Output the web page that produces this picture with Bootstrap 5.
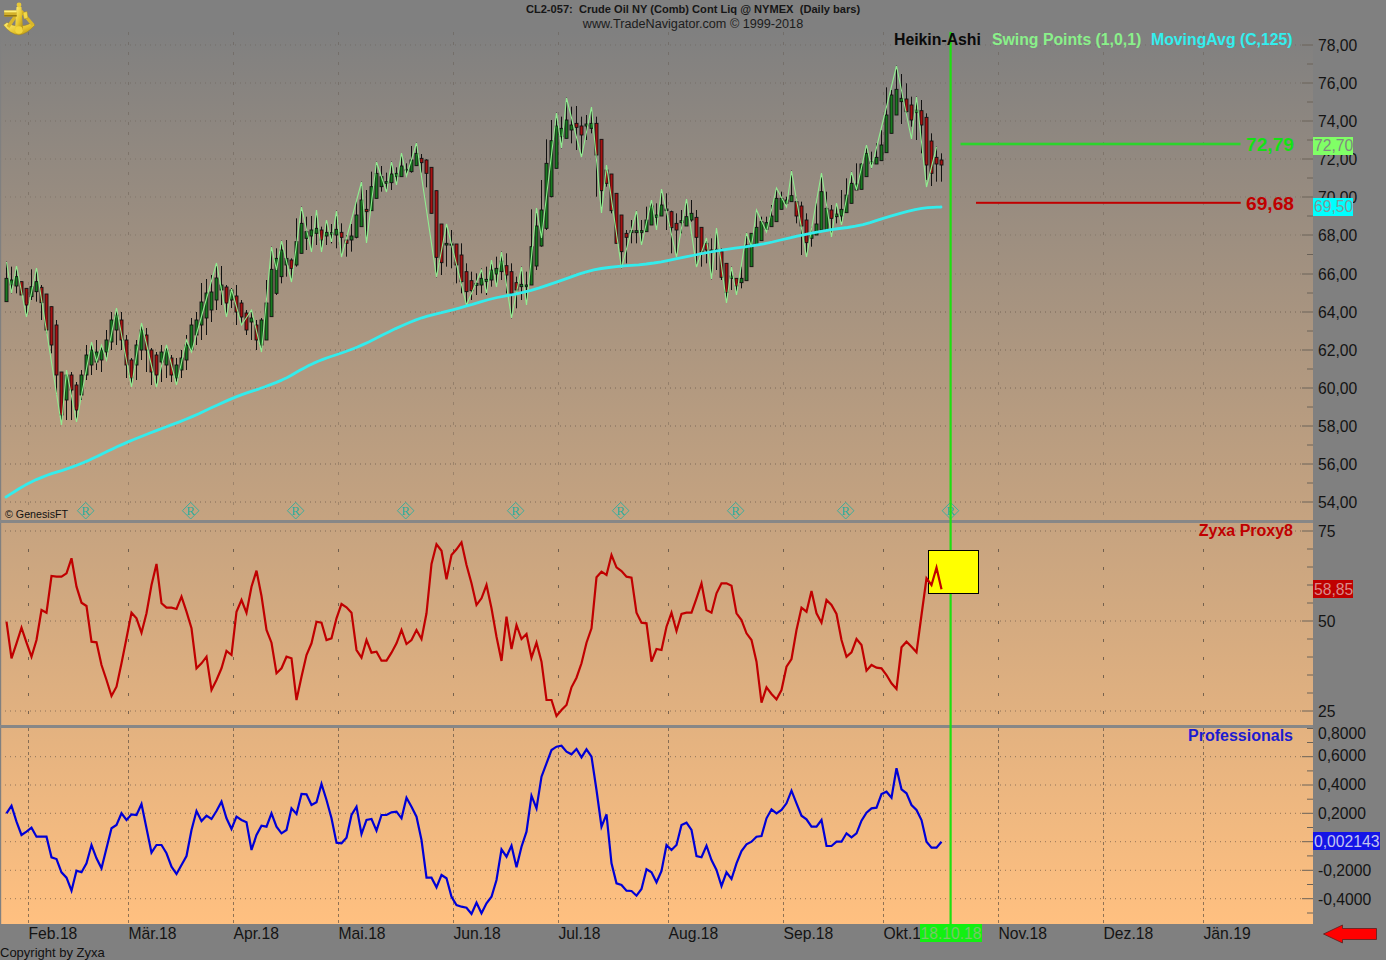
<!DOCTYPE html>
<html lang="de">
<head>
<meta charset="utf-8">
<title>CL2-057 Crude Oil NY</title>
<link href="https://cdn.jsdelivr.net/npm/bootstrap@5.3.0/dist/css/bootstrap.min.css" rel="stylesheet">
<style>
html,body{background:#808080;overflow:hidden}
.tn-app{width:1386px;height:960px;font-family:"Liberation Sans",Arial,sans-serif;background:#808080;color:#111}
.tn-head{height:32px;flex:none;color:#161616}
.tn-logo{left:0;top:0;width:36px;height:36px;z-index:3}
.tn-title{font-size:11.1px;line-height:13px;padding-top:3px;white-space:pre;font-weight:700}
.tn-sub{font-size:12.65px;line-height:16px;white-space:pre;color:#1c1c1c}
.tn-body{height:892px;flex:none}
.tn-plot{width:1313px;height:892px;flex:none;display:block;background:linear-gradient(180deg,#808080 0%,#ffc080 100%)}
.tn-axis{width:73px;height:892px;flex:none;display:block;overflow:visible}
.tn-foot{width:1386px;height:36px;flex:none;display:block}
svg text{font-family:"Liberation Sans",Arial,sans-serif}
.lab{font-size:15.7px;fill:#141414}
.leg{font-size:15.8px;font-weight:700}
.pane{font-size:16px;font-weight:700}
.big{font-size:19.2px;font-weight:700}
.tag{font-size:15.7px}
.mk{font-family:"Liberation Serif",serif !important;font-size:13px;fill:#2fae9e;text-anchor:middle}
</style>
</head>
<body>
<div class="tn-app d-flex flex-column">
  <header class="tn-head position-relative text-center">
    <svg class="tn-logo position-absolute" viewBox="0 0 36 36" aria-label="Sextant">
      <defs><linearGradient id="gold" x1="0" y1="0" x2="1" y2="1"><stop offset="0" stop-color="#fff07a"/><stop offset=".55" stop-color="#e6c52e"/><stop offset="1" stop-color="#a8850f"/></linearGradient></defs>
      <path d="M3.5 25L7 22.5Q19 30 32 22.5L35 25Q27 34 19 35Q10 34 3.5 25Z" fill="url(#gold)" stroke="#9c7c10" stroke-width=".4"/>
      <path d="M17 14L8 27M21 11L33 25" stroke="#d9b62a" stroke-width="3.4" fill="none"/>
      <path d="M16.500 7H21.500L23 30H15Z" fill="url(#gold)"/>
      <circle cx="19" cy="5" r="2.4" fill="#e8c838"/>
      <rect x="4.200" y="10.500" width="12.500" height="6" fill="#d3b02a"/>
      <rect x="4.200" y="10.500" width="12.500" height="1.800" fill="#fff07a"/>
      <rect x="4.200" y="15" width="12.500" height="1.500" fill="#94760f"/>
      <path d="M23 12.500L27 11.500L28 18L24 19Z" fill="#f2d84a" stroke="#a8850f" stroke-width=".4"/>
      <circle cx="19" cy="30" r="3.800" fill="#f3d63c"/>
    </svg>
    <div class="tn-title">CL2-057:  Crude Oil NY (Comb) Cont Liq @ NYMEX  (Daily bars)</div>
    <div class="tn-sub">www.TradeNavigator.com © 1999-2018</div>
  </header>
  <div class="tn-body d-flex">
    <svg class="tn-plot" id="plot" viewBox="0 32 1313 892" xmlns="http://www.w3.org/2000/svg">
      <g id="grid"></g>
      <g id="marks"></g>
      <g id="bars"></g>
      <polyline id="swing" fill="none" stroke="#90ee90" stroke-width="1.1" stroke-linejoin="miter"/>
      <polyline id="ma" fill="none" stroke="#33ecec" stroke-width="2.8" stroke-linejoin="round" stroke-linecap="round"/>
      <rect x="0" y="32" width="1.2" height="892" fill="#808080"/>
      <rect x="0" y="520" width="1313" height="3" fill="#878787"/>
      <rect x="0" y="725" width="1313" height="3" fill="#878787"/>
      <rect x="949.5" y="32" width="2.2" height="892" fill="#1ee010"/>
      <rect x="928.5" y="550.5" width="50" height="43" fill="#ffff00" stroke="#000" stroke-width="1"/>
      <polyline id="proxy" fill="none" stroke="#c00000" stroke-width="2.2" stroke-linejoin="miter"/>
      <polyline id="prof" fill="none" stroke="#0000d6" stroke-width="2.2" stroke-linejoin="miter"/>
      <rect x="960.5" y="142.700" width="280" height="2.600" fill="#2cd42c"/>
      <rect x="976" y="201.800" width="264.700" height="2" fill="#c00000"/>
      <text class="big" x="1246" y="150.700" fill="#14e014">72,79</text>
      <text class="big" x="1246" y="209.500" fill="#c00000">69,68</text>
      <text class="leg" x="894" y="44.700" fill="#0a0a0a">Heikin-Ashi</text>
      <text class="leg" x="992" y="44.700" fill="#8af08a">Swing Points (1,0,1)</text>
      <text class="leg" x="1151" y="44.700" fill="#33eeee">MovingAvg (C,125)</text>
      <text class="pane" x="1293" y="535.700" fill="#c00000" text-anchor="end">Zyxa Proxy8</text>
      <text class="pane" x="1293" y="740.700" fill="#1c1cd0" text-anchor="end">Professionals</text>
      <text x="5" y="518" font-size="10.7" fill="#111">© GenesisFT</text>
    </svg>
    <svg class="tn-axis" viewBox="1313 32 73 892" xmlns="http://www.w3.org/2000/svg">
      <g id="axis"></g>
      <rect x="1313" y="137" width="40" height="18" fill="#80ff66"/>
      <text class="tag" x="1314" y="151" fill="#808880">72,70</text>
      <rect x="1313" y="198" width="40" height="18" fill="#00ffff"/>
      <text class="tag" x="1314" y="212.300" fill="#7f9a9a">69,50</text>
      <rect x="1313" y="580" width="40" height="18" fill="#c00000"/>
      <text class="tag" x="1314" y="594.500" fill="#d98c8c">58,85</text>
      <rect x="1313" y="832" width="67" height="18" fill="#1414e6"/>
      <text class="tag" x="1314" y="846.500" fill="#c4c4f0">0,002143</text>
    </svg>
  </div>
  <svg class="tn-foot" viewBox="0 924 1386 36" xmlns="http://www.w3.org/2000/svg">
    <g id="dates"></g>
    <rect x="920" y="924" width="62" height="18" fill="#12f012"/>
    <text class="lab" x="920.500" y="939" style="fill:#78c868">18.10.18</text>
    <path d="M1323.5 934L1342.5 925V928.5H1376.5V939.5H1342.5V943Z" fill="#ff0000" stroke="#5a2020" stroke-width=".8"/>
    <text x="0" y="956.700" font-size="13" fill="#111">Copyright by Zyxa</text>
  </svg>
</div>
<script src="https://cdn.jsdelivr.net/npm/bootstrap@5.3.0/dist/js/bootstrap.bundle.min.js"></script>
<script>
const X=k=>6.5+5*k;
const Z=s=>s.trim().split(/\s+/).map(r=>{const a=r.split(',').map(Number);return [a[0]/3,a[1]/3,a[2]/3,a[3]/3,a[4]];});
const P=s=>s.trim().split(/\s+/).map(r=>r.split(',').map(Number));
const bars=[].concat(
Z(`785,905,835,905,1 800,880,840,855,1 798,880,830,858,1 845,885,845,885,0 865,945,865,915,0 808,900,860,890,1 805,905,845,875,1 855,960,862,908,0 882,1000,882,990,0 920,1060,920,1035,0`),
P(`320,395,325,375,0 372,425,372,415,0 370,420,375,400,1 372,420,375,390,0 382,422,385,410,0 370,400,375,395,1 345,380,355,375,1 342,375,350,365,1 340,370,352,362,1 345,372,350,360,1 330,360,340,352,1 312,350,320,342,1 308,345,315,330,1 312,350,320,340,0 335,378,340,365,0 358,387,360,378,0 340,380,345,365,1 323,360,330,350,1 328,372,335,350,0 348,385,350,372,0 352,385,355,375,0 345,382,352,362,1 345,378,350,365,1 355,382,358,375,0 358,385,365,378,1 350,378,358,370,1 335,370,345,360,1 318,352,325,350,1 312,345,320,335,1 283,340,302,325,1 279,335,293,318,1 275,322,292,310,1 263,310,278,300,1 266,305,285,290,1 285,317,287,303,0 288,308,290,300,1 285,325,296,312,0 300,325,303,317,0 310,335,313,330,0 310,340,318,322,1 320,350,325,340,0 318,352,320,345,1 280,340,303,340,1`),
Z(`740,950,808,950,1 745,885,775,880,1 722,850,750,830,1 720,830,775,795,1 775,845,780,805,0 655,800,725,795,1 620,760,670,760,1 650,750,695,715,1 648,755,690,708,1 630,735,685,700,1 680,755,690,720,0 660,735,697,708,1 672,730,698,704,1 632,745,688,705,1 670,770,697,712,0 705,770,720,730,0 672,755,708,720,1 600,715,645,712,1 545,680,600,680,1 570,728,628,635,0 515,632,560,632,1 485,595,520,595,1 498,575,530,560,1 518,575,545,550,1 485,570,522,548,1 502,555,520,530,1 460,530,498,530,1 490,528,508,512,1 438,518,480,515,1 428,497,460,497,1 462,518,475,488,0 478,562,480,520,0 502,640,502,640,0 572,832,572,772,0 672,825,672,788,0 672,800,730,735,1 690,805,732,735,1 732,850,732,795,0
730,880,765,845,0 790,920,815,875,0 815,900,842,872,0 820,885,850,856,1 805,880,835,855,1 800,885,838,845,1 780,860,810,840,1 770,860,805,822,1 755,840,783,815,1 760,880,797,825,0 790,955,815,880,0 830,925,848,870,0 800,900,853,860,1 815,915,855,860,1 628,855,740,855,1 625,810,678,798,1 540,740,630,738,1 418,690,490,685,1 360,592,422,590,1 338,505,378,505,1 350,445,385,410,1 293,415,360,415,1 320,430,375,390,1 318,450,370,382,0 350,470,378,405,0 345,420,372,378,1 322,400,370,385,1 350,590,370,465,0 418,638,418,572,0 495,560,510,550,0 522,640,522,632,0 580,730,580,730,0 645,805,645,755,0 690,790,700,712,0 660,730,692,698,1 632,730,692,698,1 660,735,692,698,1 620,695,660,695,1 600,675,618,675,1 610,690,645,652,1 568,648,615,648,1 580,690,627,632,1 632,760,635,683,0 640,770,670,690,0 630,700,662,668,1 598,678,650,678,1 600,665,640,660,1 630,800,652,712,0 682,800,682,755,0 715,790,730,750,0 715,838,750,758,1 685,810,748,755,1 745,840,755,832,0 790,908,790,878,0 800,870,828,835,1 835,885,835,858,0 800,865,835,848,1 698,842,735,842,1 700,800,700,800,1 630,735,682,735,1 650,722,665,722,1 650,695,668,688,1 615,680,648,680,1 565,665,595,665,1 575,628,595,628,1 590,620,600,610,1 512,605,587,605,1 590,670,605,648,0 605,765,618,678,0 640,770,660,728,0 680,740,700,715,1 610,705,672,705,1 520,690,575,690,1 575,690,625,690,1 615,710,630,655,0 610,670,642,650,1 570,675,628,648,1 535,638,585,638,1 515,610,550,610,1 490,570,552,570,1 490,568,492,568,1 435,530,460,530,1 455,505,485,490,1 430,492,472,492,1 390,482,435,482,1 262,458,345,458,1 270,400,285,400,1 197,345,268,345,1 222,372,295,305,1 250,340,297,335,0 290,380,315,360,0 290,420,330,338,1 300,460,332,375,0 340,540,352,495,0 400,558,423,520,0 440,545,472,492,0 460,545,480,495,0`));
let h='';
bars.forEach((b,k)=>{const x=X(k),t=Math.min(b[2],b[3]),bt=Math.max(b[3],t+1.2);
 h+=`<line x1="${x}" x2="${x}" y1="${b[0]}" y2="${b[1]}" stroke="#111" stroke-width="1"/>`;
 h+=`<rect x="${x-1.5}" y="${t}" width="3" height="${bt-t}" fill="${b[4]?'#187a20':'#a81212'}" stroke="#111" stroke-width=".9"/>`;});
document.getElementById('bars').innerHTML=h;

document.getElementById('swing').setAttribute('points',`6.5,262 11.5,293 16.5,266 26.5,317 36.5,268 61.5,425 66.5,370 76.5,422 91.5,342 96.5,362 101.5,345 106.5,360 116.5,308 131.5,387 141.5,323 156.5,387 166.5,345 176.5,385 186.5,340 191.5,352 216.5,263 226.5,317 231.5,289 241.5,325 251.5,310 261.5,352 271.5,247 276.5,270 281.5,241 291.5,282 301.5,207 311.5,252 316.5,210 321.5,252 326.5,220 331.5,242 336.5,211 341.5,257 361.5,182 366.5,243 376.5,162 386.5,192 391.5,162 396.5,185 401.5,153 406.5,176 416.5,143 436.5,277 446.5,224 466.5,305 481.5,270 486.5,293 491.5,260 496.5,287 501.5,252 511.5,318 521.5,267 526.5,305 536.5,208 541.5,238 556.5,113 561.5,148 566.5,98 581.5,157 591.5,107 601.5,213 606.5,165 621.5,268 636.5,211 641.5,245 651.5,200 656.5,230 661.5,189 676.5,257 686.5,199 696.5,267 706.5,238 711.5,279 716.5,228 726.5,303 731.5,267 736.5,295 746.5,233 751.5,247 756.5,210 766.5,232 776.5,188 786.5,207 791.5,171 806.5,257 821.5,173 831.5,237 836.5,203 841.5,225 851.5,172 856.5,190 866.5,145 871.5,168 896.5,66 911.5,139 916.5,97 926.5,187 936.5,147`);
let ma=`6,497 28,483 50,474 70,468 90,460 110,450 130,441 160,429 190,418 215,406 240,395 262,388 285,379 302,369 320,360 345,352 365,344 392,330 420,318 440,313 460,308 493,298 527,292 560,281 590,270 620,266 650,264 680,258 720,250 760,245 793,237 827,230 860,226 887,217 920,208 941,207`.split(' ').map(s=>s.split(',').map(Number));
for(let it=0;it<2;it++){const n=[ma[0]];for(let i=0;i<ma.length-1;i++){const a=ma[i],b=ma[i+1];n.push([a[0]*.75+b[0]*.25,a[1]*.75+b[1]*.25],[a[0]*.25+b[0]*.75,a[1]*.25+b[1]*.75]);}n.push(ma[ma.length-1]);ma=n;}
document.getElementById('ma').setAttribute('points',ma.map(p=>p[0].toFixed(1)+','+p[1].toFixed(1)).join(' '));

const proxy=[395,505,460,413,458,500,450,360,368,258,260,260,250,205,290,338,348,455,457,525,570,618,590,520,445,368,385,428,370,285,222,340,353,353,357,320,365,415,535,520,500,600,570,535,483,495,365,330,368,290,242,318,420,458,550,535,500,505,630,560,495,460,395,398,450,445,385,342,352,368,480,503,450,488,485,512,512,488,460,420,462,450,420,447,370,222,163,182,268,195,178,157,225,280,345,325,285,355,440,513,380,477,405,447,432,503,458,515,630,630,678,660,645,592,563,520,458,415,262,245,255,195,232,243,260,263,368,398,400,515,477,480,410,368,423,372,368,368,325,280,360,368,310,280,280,287,370,390,430,450,515,638,592,612,628,600,530,507,420,353,365,303,370,398,330,345,372,450,500,487,447,465,542,525,533,535,555,580,597,472,455,470,487,375,265,285,233,298];
const prof=[265,242,290,330,320,308,335,335,335,397,402,442,458,497,437,442,415,360,400,430,370,310,300,265,285,268,270,237,310,383,360,360,385,425,447,420,393,315,258,288,272,282,258,230,280,312,275,285,292,375,330,302,305,265,305,325,315,250,267,207,208,240,232,177,225,280,353,355,338,270,245,327,285,282,317,270,270,262,260,280,218,245,275,345,458,458,487,450,460,515,540,545,548,567,533,565,535,515,465,373,395,362,427,365,320,212,250,155,115,75,65,62,80,88,72,97,73,95,195,305,268,415,475,480,497,498,512,492,433,442,472,438,360,375,360,300,293,315,393,397,362,405,435,483,442,462,415,378,358,350,335,333,280,253,265,255,235,197,235,272,283,305,305,285,363,363,350,350,325,337,325,287,263,250,248,207,200,218,130,193,205,240,255,285,350,368,368,350];
document.getElementById('proxy').setAttribute('points',proxy.map((v,k)=>X(k)+','+(490+v/3).toFixed(1)).join(' '));
document.getElementById('prof').setAttribute('points',prof.map((v,k)=>X(k)+','+(725+v/3).toFixed(1)).join(' '));

const months=[['Feb.18',28.5],['Mär.18',128.5],['Apr.18',233.5],['Mai.18',338.5],['Jun.18',453.5],['Jul.18',558.5],['Aug.18',668.5],['Sep.18',783.5],['Okt.1',883.5],['Nov.18',998.5],['Dez.18',1103.5],['Jän.19',1203.5]];
const p1=[45,83,121,159,197,235,274,312,350,388,426,464,502],p2=[531,621,711],p3=[756.7,785,813.3,841.7,870.3,898.7];
const gc='#54483c';let g='';
months.forEach(m=>{const x=m[1];
 g+=`<line x1="${x}" x2="${x}" y1="32" y2="520" stroke="${gc}" stroke-opacity=".32" stroke-dasharray="3 7"/>`;
 g+=`<line x1="${x}" x2="${x}" y1="549" y2="720" stroke="${gc}" stroke-opacity=".75" stroke-dasharray="3 15"/>`;
 g+=`<line x1="${x}" x2="${x}" y1="728" y2="924" stroke="${gc}" stroke-opacity=".65" stroke-dasharray="3 3"/>`;});
[...p1,...p2,...p3].forEach(y=>{const o=y<300?.32:.6;
 g+=`<line x1="5" x2="1303" y1="${y}" y2="${y}" stroke="${gc}" stroke-opacity="${o}" stroke-dasharray="1 4"/>`;});
const tick=(y,l)=>`<line x1="${1313-l}" x2="1313" y1="${y}" y2="${y}" stroke="#6a6258"/>`;
p1.forEach((y,i)=>{g+=tick(y,11);if(i<p1.length-1)g+=tick((y+p1[i+1])/2,6);});
g+=tick(502+19,6);
p2.forEach((y,i)=>{g+=tick(y,11);if(i<2)for(let j=1;j<5;j++)g+=tick(y+18*j,6);});
p3.forEach((y,i)=>{g+=tick(y,11);if(i<5)g+=tick(y+14.2,6);});
g+=tick(742.5,6)+tick(728.5,6)+tick(913,6);
document.getElementById('grid').innerHTML=g;

document.getElementById('marks').innerHTML=[85.7,190.7,295.7,405.7,515.7,620.7,735.7,845.7,950.5].map(x=>
 `<path d="M${x} 502.4L${x+8.3} 510.7L${x} 519L${x-8.3} 510.7Z" fill="none" stroke="#2fae9e" stroke-width=".9"/><text class="mk" x="${x}" y="515">R</text>`).join('');

const al=[['78,00',45],['76,00',83],['74,00',121],['72,00',159],['70,00',197],['68,00',235],['66,00',274],['64,00',312],['62,00',350],['60,00',388],['58,00',426],['56,00',464],['54,00',502],['75',531],['50',621],['25',711],['0,8000',733.3],['0,6000',755],['0,4000',784],['0,2000',813],['-0,2000',870],['-0,4000',899]];
document.getElementById('axis').innerHTML=al.map(a=>`<text class="lab" x="1318" y="${a[1]+5.6}">${a[0]}</text>`).join('');
document.getElementById('dates').innerHTML=months.map(m=>`<text class="lab" x="${m[1]}" y="939">${m[0]}</text>`).join('');
</script>
</body>
</html>
